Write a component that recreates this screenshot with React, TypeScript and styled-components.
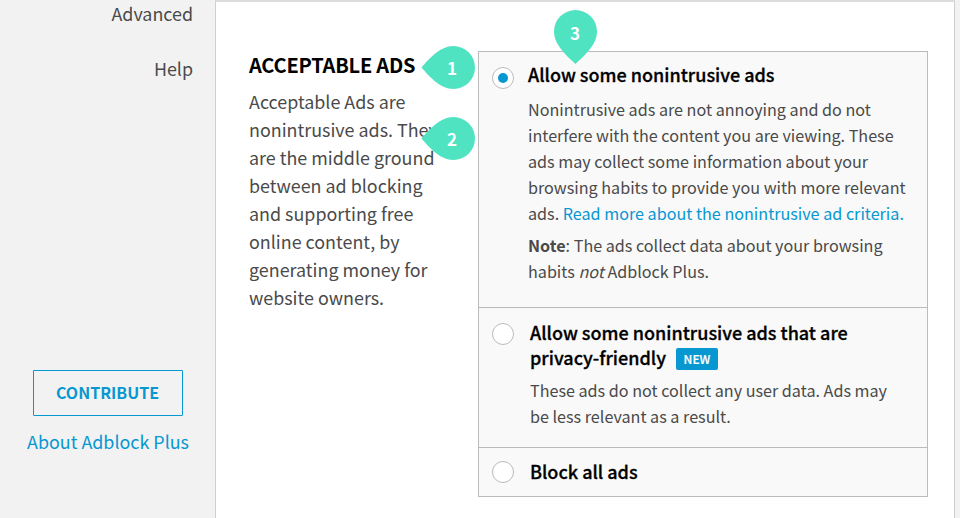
import React from "react";
import styled, { createGlobalStyle } from "styled-components";

const Global = createGlobalStyle`
  * { box-sizing: border-box; }
  body {
    margin: 0;
    background: #f2f2f2;
    color: #4a4a4a;
    font-family: "Noto Sans CJK SC", "Noto Sans", sans-serif;
    overflow: hidden;
  }
  p, h2, h3 { margin: 0; }
`;

const Page = styled.div`
  position: relative;
  display: grid;
  grid-template-columns: 215px 740px;
  height: 518px;
  overflow: hidden;
`;

const Sidebar = styled.aside`
  display: flex;
  flex-direction: column;
  justify-content: space-between;
  padding-bottom: 63px;
`;

const Nav = styled.nav`
  display: flex;
  flex-direction: column;
  gap: 27px;
  margin-top: -1px;
  padding: 0 22px 0 0;
  text-align: right;
`;

const NavItem = styled.a`
  font-size: 17.9px;
  line-height: 28px;
`;

const Footer = styled.div`
  display: flex;
  flex-direction: column;
  align-items: center;
  gap: 12px;
  padding-left: 1px;
`;

const Contribute = styled.button`
  width: 150px;
  height: 46px;
  margin-bottom: -1px;
  padding: 0 1px 2px 0;
  border: 1px solid #0797d1;
  border-radius: 1px;
  background: transparent;
  color: #0797d1;
  font: 700 16px/42px "Noto Sans CJK SC", sans-serif;
`;

const About = styled.a`
  color: #0797d1;
  font-size: 17.9px;
  line-height: 28px;
`;

const Main = styled.main`
  display: grid;
  grid-template-columns: 229px 450px;
  align-items: start;
  padding: 49px 0 0 33px;
  background: #fff;
  border: 1px solid #cfcfcf;
  border-top: 2px solid #dcdcdc;
  border-bottom: 0;
`;

const Heading = styled.h2`
  color: #000;
  font-size: 20px;
  line-height: 28px;
  font-weight: 700;
  letter-spacing: -0.22px;
  white-space: nowrap;
`;

const Description = styled.p`
  margin-top: 8px;
  font-size: 17.9px;
  line-height: 28px;
  white-space: nowrap;
`;

const Options = styled.div`
  height: 446px;
  display: grid;
  grid-template-rows: 255px 139px 48px;
  row-gap: 1px;
  border: 1px solid #bbb;
  background: #bbb;
`;

const Option = styled.section<{ $top: number; $gap: number }>`
  display: flex;
  align-items: flex-start;
  gap: ${(p) => p.$gap}px;
  padding: ${(p) => p.$top}px 0 0 13px;
  background: #f9f9f9;
`;

const Radio = styled.span<{ $offset: number }>`
  flex: none;
  display: grid;
  place-items: center;
  width: 22px;
  height: 22px;
  margin-top: ${(p) => p.$offset}px;
  border: 1px solid #bbb;
  border-radius: 50%;
  background: #fff;
`;

const Dot = styled.span`
  width: 10px;
  height: 10px;
  border-radius: 50%;
  background: #0797d1;
`;

const Title = styled.h3`
  color: #000;
  font-size: 18px;
  line-height: 25px;
  font-weight: 500;
  -webkit-text-stroke: 0.3px #000;
  white-space: nowrap;
`;

const Text = styled.p<{ $mt: number }>`
  margin-top: ${(p) => p.$mt}px;
  font-size: 16.15px;
  line-height: 26px;
  white-space: nowrap;
`;

const Link = styled.a`
  color: #0797d1;
`;

const Badge = styled.span`
  display: inline-block;
  width: 42px;
  height: 22px;
  margin: 3px 0 0 10px;
  border-radius: 2px;
  background: #0797d1;
  color: #fff;
  font-size: 12px;
  line-height: 22px;
  font-weight: 500;
  -webkit-text-stroke: 0.2px #fff;
  text-align: center;
  vertical-align: top;
`;

const Pin = styled.div<{ $x: number; $y: number }>`
  position: absolute;
  left: ${(p) => p.$x}px;
  top: ${(p) => p.$y}px;
  svg { display: block; }
`;

const PinNumber = styled.span<{ $x: number; $y: number }>`
  position: absolute;
  left: ${(p) => p.$x}px;
  top: ${(p) => p.$y}px;
  width: 20px;
  color: #fff;
  font-size: 17px;
  line-height: 24px;
  font-weight: 700;
  text-align: center;
`;

const SidePin = ({ y, n }: { y: number; n: number }) => (
  <Pin $x={421} $y={y}>
    <svg width="54" height="44" viewBox="0 0 54 44">
      <path d="M0.5 21.5C8 13 19 0 32.5 0a21.5 21.5 0 0 1 0 43C19 43 8 30 .5 21.5Z" fill="#50e3c2" />
    </svg>
    <PinNumber $x={21} $y={10}>{n}</PinNumber>
  </Pin>
);

export default function App() {
  return (
    <>
      <Global />
      <Page>
        <Sidebar>
          <Nav>
            <NavItem>Advanced</NavItem>
            <NavItem>Help</NavItem>
          </Nav>
          <Footer>
            <Contribute>CONTRIBUTE</Contribute>
            <About>About Adblock Plus</About>
          </Footer>
        </Sidebar>
        <Main>
          <div>
            <Heading>ACCEPTABLE ADS</Heading>
            <Description>
              Acceptable Ads are<br />
              nonintrusive ads. They<br />
              are the middle ground<br />
              between ad blocking<br />
              and supporting free<br />
              online content, by<br />
              generating money for<br />
              website owners.
            </Description>
          </div>
          <Options>
            <Option $top={10} $gap={14}>
              <Radio $offset={5}><Dot /></Radio>
              <div>
                <Title>Allow some nonintrusive ads</Title>
                <Text $mt={9}>
                  Nonintrusive ads are not annoying and do not<br />
                  interfere with the content you are viewing. These<br />
                  ads may collect some information about your<br />
                  browsing habits to provide you with more relevant<br />
                  ads. <Link>Read more about the nonintrusive ad criteria.</Link>
                </Text>
                <Text $mt={6}>
                  <b>Note</b>: The ads collect data about your browsing<br />
                  habits <i>not</i> Adblock Plus.
                </Text>
              </div>
            </Option>
            <Option $top={12} $gap={16}>
              <Radio $offset={3} />
              <div>
                <Title>
                  Allow some nonintrusive ads that are<br />
                  privacy-friendly<Badge>NEW</Badge>
                </Title>
                <Text $mt={7}>
                  These ads do not collect any user data. Ads may<br />
                  be less relevant as a result.
                </Text>
              </div>
            </Option>
            <Option $top={11} $gap={16}>
              <Radio $offset={2} />
              <Title>Block all ads</Title>
            </Option>
          </Options>
        </Main>
        <SidePin y={46} n={1} />
        <SidePin y={117} n={2} />
        <Pin $x={554} $y={10}>
          <svg width="44" height="54" viewBox="0 0 44 54">
            <path d="M21.5 54C13 46 0 35 0 21.5a21.5 21.5 0 0 1 43 0C43 35 30 46 21.5 54Z" fill="#50e3c2" />
          </svg>
          <PinNumber $x={11} $y={11}>3</PinNumber>
        </Pin>
      </Page>
    </>
  );
}
